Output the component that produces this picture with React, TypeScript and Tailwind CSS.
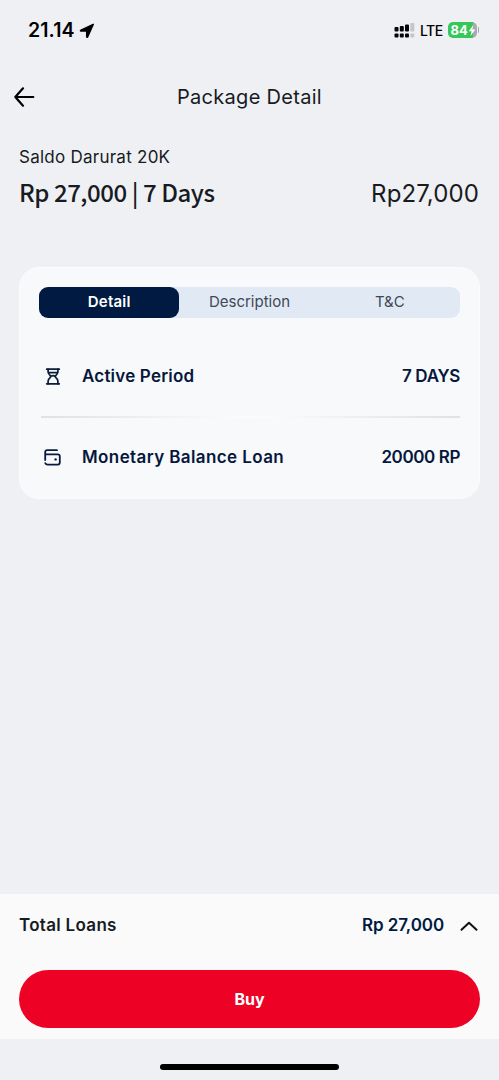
import { useState } from "react";

const tabs = ["Detail", "Description", "T&C"];

const LocationIcon: React.FC = () => (
  <svg width="16" height="16" viewBox="0 0 16 16" className="ml-1">
    <path
      d="M14.2 1.4 8.6 14Q7.9 14.8 7.7 13.7V8.7Q7.7 8.1 7.1 8.1H2.1Q.8 7.8 2 7.1Z"
      fill="#000"
      stroke="#000"
      strokeWidth="1.5"
      strokeLinejoin="round"
    />
  </svg>
);

const SignalIcon: React.FC = () => (
  <svg width="21" height="16" viewBox="0 0 21 16" className="mt-0.5">
    <g fill="#050507">
      <rect x="0.5" y="4" width="4" height="4.5" rx="1" />
      <rect x="5.8" y="3" width="4" height="5.5" rx="1" />
      <rect x="11" y="1.5" width="4" height="7" rx="1" />
      <rect x="0.5" y="10.5" width="4" height="4" rx="1" />
      <rect x="5.8" y="10.5" width="4" height="4" rx="1" />
      <rect x="11" y="10.5" width="4" height="4" rx="1" />
    </g>
    <g fill="#c5c6ca">
      <rect x="16.3" y="0" width="4" height="8.5" rx="1" />
      <rect x="16.3" y="10.5" width="4" height="4" rx="1" />
    </g>
  </svg>
);

const Battery: React.FC = () => (
  <div className="ml-[5px] flex items-center">
    <div className="flex h-4 w-[29px] items-center rounded-[5px] bg-[linear-gradient(90deg,#35c759_85%,#a9abb0_85%)] pl-[3px]">
      <span className="text-[13px] leading-4 font-bold text-white">84</span>
      <svg width="8" height="13" viewBox="0 0 8 13">
        <path d="M5.2 1 .8 7.2h2.7L2.6 12l4.7-6.5H4.5Z" fill="#fff" />
      </svg>
    </div>
    <span className="ml-px h-1.5 w-[1.5px] rounded-r-full bg-[#a9abb0]" />
  </div>
);

const HourglassIcon: React.FC = () => (
  <svg
    width="16"
    height="17"
    viewBox="0 0 16 17"
    fill="none"
    stroke="#0b1d38"
    strokeWidth="1.7"
    strokeLinecap="round"
  >
    <path d="M1.7 1.2h12.6M1.7 15.8h12.6M3.6 4.6h8.8" />
    <path d="M3.1 1.2v2.6c0 2.6 2.6 3.2 2.6 4.7s-2.6 2.1-2.6 4.7v2.6M12.9 1.2v2.6c0 2.6-2.6 3.2-2.6 4.7s2.6 2.1 2.6 4.7v2.6" />
    <path d="M5.9 8.3q2.1-1.2 4.2 0" />
  </svg>
);

const WalletIcon: React.FC = () => (
  <svg
    width="17"
    height="17"
    viewBox="0 0 17 17"
    fill="none"
    stroke="#071b42"
    strokeWidth="1.8"
    strokeLinecap="round"
  >
    <path d="M13 1.2H3.2Q1.2 1.2 1.2 3.2V11M1.2 5.4H13.8Q15.8 5.4 15.8 7.4V13.6Q15.8 15.6 13.8 15.6H3.6Q1.9 15.6 1.3 14.2" />
    <circle cx="11.6" cy="10.4" r="1.2" fill="#071b42" stroke="none" />
  </svg>
);

const App: React.FC = () => {
  const [activeTab, setActiveTab] = useState("Detail");

  return (
    <div className="flex h-[1080px] w-[499px] flex-col overflow-hidden bg-[#eff0f4] font-['Inter',sans-serif] text-[#171b22]">
      {/* status bar */}
      <div className="flex h-[60px] items-center justify-between pr-5 pl-7 text-black">
        <div className="flex items-center pt-px">
          <span className="text-[19.5px] font-semibold tracking-[0.1px]">
            21.14
          </span>
          <LocationIcon />
        </div>
        <div className="flex items-center">
          <SignalIcon />
          <span className="ml-[5px] text-[14px] font-medium tracking-[-0.6px]">
            LTE
          </span>
          <Battery />
        </div>
      </div>

      {/* header */}
      <header className="grid h-[74px] grid-cols-[60px_1fr_60px] items-center">
        <button className="pl-3.5">
          <svg
            width="21"
            height="20"
            viewBox="0 0 21 20"
            fill="none"
            stroke="#000"
            strokeWidth="2.2"
            strokeLinecap="round"
            strokeLinejoin="round"
            className="-mt-px"
          >
            <path d="M9 1.3 1.3 10 9 18.7M1.3 10H19.3" />
          </svg>
        </button>
        <h1 className="text-center text-[20px] tracking-[0.3px]">
          Package Detail
        </h1>
      </header>

      <section className="pt-2.5 pr-5 pl-[19px]">
        <p className="text-[17px] leading-[26px] tracking-[0.25px]">
          Saldo Darurat 20K
        </p>
        <div className="flex h-[47px] items-center justify-between">
          <span className="pb-[3px] font-['Noto_Sans_CJK_SC',sans-serif] text-[24px] leading-[30px] font-medium tracking-[-0.45px]">
            Rp 27,000 | 7 Days
          </span>
          <span className="text-[24px] tracking-[0.1px]">Rp27,000</span>
        </div>
      </section>

      {/* package card */}
      <section className="mx-[19px] mt-[50px] h-[232px] rounded-[20px] border border-[#fbfcfd] bg-[#f7f9fb] px-[19px] pt-[19px]">
        <div className="grid h-[31px] grid-cols-3 rounded-[9px] bg-[#e1eaf4] text-[15px]">
          {tabs.map((tab) => (
            <button
              key={tab}
              onClick={() => setActiveTab(tab)}
              className={`rounded-[9px] ${
                activeTab === tab
                  ? "bg-[#001a41] font-semibold tracking-[0.2px] text-white"
                  : "text-[#404858]"
              }`}
            >
              {tab}
            </button>
          ))}
        </div>
        <div className="mt-[18px] flex h-20 items-center text-[17px] font-semibold text-[#06173d]">
          <span className="flex w-[43px] pl-1.5">
            <HourglassIcon />
          </span>
          <span className="flex-1 pt-0.5 tracking-[0.2px]">Active Period</span>
          <span className="pt-0.5 tracking-[-0.3px]">7 DAYS</span>
        </div>
        <div className="ml-0.5 h-[1.5px] bg-[linear-gradient(90deg,#dfe1e4,#fbfcfd_48%,#fbfcfd_52%,#dfe1e4)]" />
        <div className="flex h-20 items-center text-[17px] font-semibold text-[#06173d]">
          <span className="flex w-[43px] pl-[5px]">
            <WalletIcon />
          </span>
          <span className="flex-1 pt-px tracking-[0.4px]">
            Monetary Balance Loan
          </span>
          <span className="pt-px tracking-[-0.4px]">20000 RP</span>
        </div>
      </section>

      {/* order summary */}
      <footer className="mt-auto h-[145px] bg-[#fafafb] px-[19px]">
        <div className="flex h-[63px] items-center text-[17px] font-semibold">
          <span className="flex-1 tracking-[0.3px]">Total Loans</span>
          <span className="tracking-[-0.1px] text-[#001a41]">Rp 27,000</span>
          <svg
            width="18"
            height="10"
            viewBox="0 0 18 10"
            fill="none"
            stroke="#111"
            strokeWidth="2"
            strokeLinecap="round"
            strokeLinejoin="round"
            className="mr-0.5 ml-4"
          >
            <path d="M1.5 8.7 9 1.7l7.5 7" />
          </svg>
        </div>
        <button className="mt-[13px] block h-[58px] w-full rounded-full bg-[#ed0226] text-[16px] font-bold text-white">
          Buy
        </button>
      </footer>
      <div className="flex h-[41px] shrink-0 justify-center pt-[25px]">
        <div className="h-1.5 w-[179px] rounded-full bg-black" />
      </div>
    </div>
  );
};

export default App;
